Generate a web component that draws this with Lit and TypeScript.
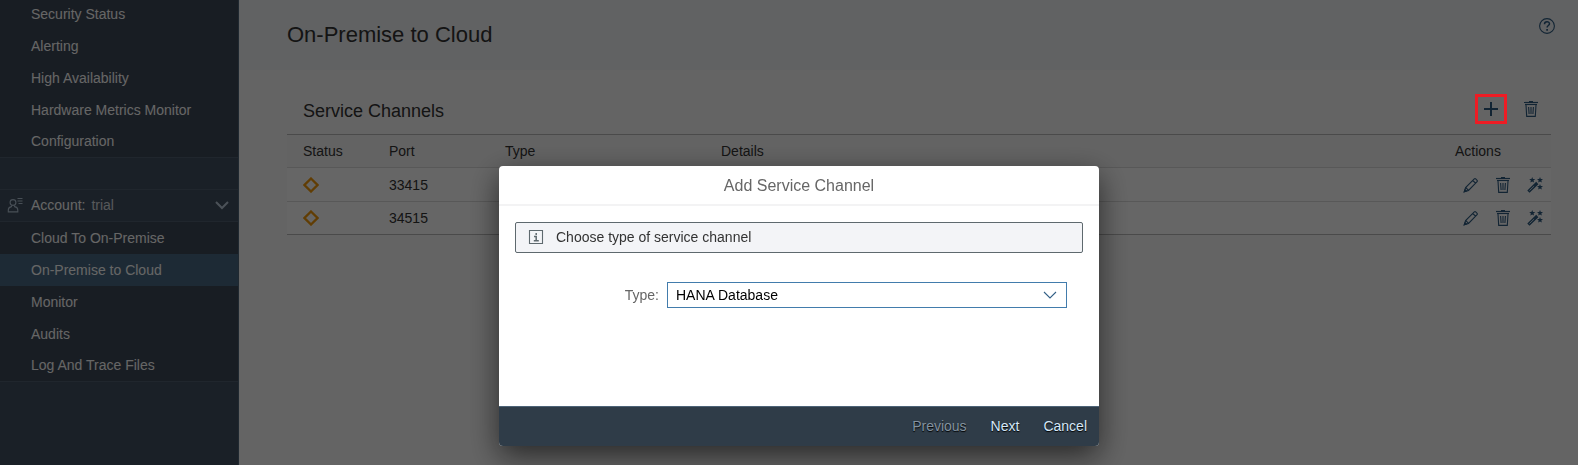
import { LitElement, html, css, svg } from "lit";
import { customElement, state } from "lit/decorators.js";

interface Channel {
  port: string;
}

const trash = svg`<path d="M1 1.500h14" stroke-width="1.200" /><path d="M6 .7h4" stroke-width="1.400" /><path d="M2 3.500h12" /><path d="M3 4l.7 11.400h8.600L13 4M5.600 6l.5 7M8 6v7M10.400 6l-.5 7" />`;

const star = (x: number, y: number) =>
  svg`<path d="M${x} ${y - 3}l.8 2 2.200.1-1.700 1.300.6 2.200-1.900-1.200-1.900 1.200.6-2.200-1.700-1.300 2.200-.1z" fill="currentColor" stroke="none" />`;

const icons = {
  help: svg`<circle cx="8" cy="8" r="7.4" /><path d="M5.500 6.200c0-3.200 5-3.200 5-.4 0 1.700-2.400 1.700-2.400 3.600" stroke-width="1.500" /><path d="M8.100 11v1.800" stroke-width="1.700" />`,
  add: svg`<path d="M8 1v14M1 8h14" stroke-width="2" />`,
  trash,
  edit: svg`<path d="M1.400 14.600l1.200-4.100L11.300 1.900q.7-.6 1.400 0l1.400 1.400q.7.7 0 1.400L5.500 13.400zM2.900 10.700l2.400 2.500M9.800 3.500l2.700 2.700" /><path d="M1.200 14.800l.8-2 1.300 1.300z" fill="currentColor" />`,
  wand: svg`<path d="M1.400 14.600L10.300 6" stroke-width="3.200" /><path d="M2.400 13.600l4.700-4.500" stroke="#dfe6ec" stroke-width=".9" />${star(5.2, 3)}${star(13, 3)}${star(13, 10)}`,
  account: svg`<circle cx="6" cy="5.500" r="2.900" /><path d="M4.500 8.400v1.200q-3.200.6-3.200 3.500v1.800h9.500v-1.800q0-2.900-3.200-3.500V8.400M10.500 1.500h5M10.500 4h5M11.500 6.500h4" />`,
  chevron: svg`<path d="M2 5l6 6 6-6" />`,
  info: svg`<path d="M1.500 1.500h13v13h-13z" /><path d="M8.200 4v2M6 7.500h2.200v4M5.800 11.700h5" stroke-width="1.500" />`,
};

const icon = (name: keyof typeof icons, cls = "") =>
  html`<svg class="icon ${cls}" viewBox="0 0 16 16" aria-hidden="true">${icons[name]}</svg>`;

@customElement("app-root")
export class AppRoot extends LitElement {
  @state() private channels: Channel[] = [{ port: "33415" }, { port: "34515" }];

  private general = ["Security Status", "Alerting", "High Availability", "Hardware Metrics Monitor", "Configuration"];
  private account = ["Cloud To On-Premise", "On-Premise to Cloud", "Monitor", "Audits", "Log And Trace Files"];

  static styles = css`
    :host {
      display: grid;
      grid-template-columns: 239px 1fr;
      height: 100vh;
      overflow: hidden;
      box-sizing: border-box;
      font: 14px/16px "Liberation Sans", Arial, sans-serif;
      color: #333;
      background: #fafafa;
    }
    * {
      box-sizing: border-box;
    }
    .icon {
      display: block;
      width: 16px;
      height: 16px;
      flex: none;
      fill: none;
      stroke: currentColor;
      stroke-width: 1.1;
    }
    button {
      font: inherit;
      padding: 0;
      border: 0;
      background: none;
      color: inherit;
    }

    .side {
      background: #435261;
      border-right: 1px solid #52677b;
      color: #fff;
      overflow: hidden;
    }
    .group {
      list-style: none;
      margin: 0;
      padding: 0;
      background: #3e4957;
      border-bottom: 1px solid #526070;
    }
    .group.first {
      margin-top: -2px;
    }
    .group li:last-child .link {
      height: 31px;
      padding-bottom: 1px;
    }
    .link {
      display: flex;
      align-items: center;
      height: 32px;
      padding-left: 31px;
      color: inherit;
      text-decoration: none;
    }
    .link.selected {
      background: #496a84;
    }
    .spacer {
      height: 32px;
      border-bottom: 1px solid #526070;
    }
    .account {
      display: flex;
      align-items: center;
      width: 100%;
      height: 32px;
      padding: 0 8px 1px 7px;
      border-bottom: 1px solid #526070;
      text-align: left;
    }
    .account .who {
      color: #b3c5d8;
    }
    .account .name {
      flex: 1;
      padding-left: 8px;
    }
    .account .value {
      padding-left: 2px;
      color: #d8dde2;
    }
    .account .arrow {
      color: #bccbdc;
      stroke-width: 2;
    }

    .head {
      display: flex;
      justify-content: space-between;
      height: 70px;
      padding: 18px 23px 0 48px;
      background: #f2f4f7;
    }
    h1 {
      margin: 0;
      font-size: 22px;
      line-height: 34px;
      font-weight: normal;
    }
    .tool {
      display: flex;
      align-items: center;
      justify-content: center;
      color: #2d5a80;
    }
    .head .tool {
      height: 16px;
    }
    .content {
      padding: 18px 27px 0 48px;
    }
    .bar {
      display: flex;
      align-items: center;
      height: 42px;
      margin-bottom: 4px;
      padding: 0 4px 0 16px;
    }
    h2 {
      flex: 1;
      margin: 0;
      padding-top: 4px;
      font-size: 18px;
      line-height: 20px;
      font-weight: normal;
    }
    .bar .tool {
      width: 32px;
      height: 30px;
      margin-left: 8px;
    }
    .bar .marked {
      position: relative;
    }
    .marked::after {
      content: "";
      position: absolute;
      inset: 0;
      z-index: 3;
      border: 3px solid #ed1c24;
    }
    table {
      width: 100%;
      border-collapse: collapse;
      table-layout: fixed;
      background: #fff;
    }
    th,
    td {
      height: 33px;
      padding: 0 0 0 16px;
      text-align: left;
      font-weight: normal;
      border-bottom: 1px solid #dcdcdc;
    }
    td {
      height: 34px;
    }
    th {
      background: #f7f7f7;
      border-top: 1px solid #bababa;
    }
    tbody tr:last-child td {
      height: 33px;
      border-bottom-color: #bababa;
    }
    .c-status {
      width: 86px;
    }
    .c-port {
      width: 116px;
    }
    .c-type {
      width: 216px;
    }
    .c-actions {
      width: 112px;
    }
    .diamond {
      color: #f39a0a;
      stroke-width: 2.3;
    }
    .row-actions {
      display: flex;
      gap: 16px;
      padding-left: 8px;
    }

    .layer {
      position: fixed;
      inset: 0;
      z-index: 2;
      display: flex;
      align-items: flex-end;
      justify-content: center;
      padding: 0 0 19px 20px;
      background: rgba(0, 0, 0, 0.6);
    }
    .dialog {
      display: flex;
      flex-direction: column;
      width: 600px;
      height: 280px;
      border-radius: 4px;
      overflow: hidden;
      background: #fff;
      box-shadow: 0 10px 30px rgba(0, 0, 0, 0.6);
    }
    .dialog h3 {
      margin: 0;
      padding-top: 2px;
      font-size: 16px;
      line-height: 36px;
      font-weight: normal;
      text-align: center;
      color: #666;
      border-bottom: 2px solid #f3f3f4;
    }
    .body {
      flex: 1;
      padding: 16px;
    }
    .strip {
      display: flex;
      align-items: center;
      gap: 12px;
      height: 31px;
      padding: 0 12px 1px;
      border: 1px solid #5e696e;
      border-radius: 2px;
      background: #f3f4f7;
    }
    .strip .icon {
      color: #5e696e;
    }
    .field {
      display: grid;
      grid-template-columns: 144px 1fr;
      align-items: center;
      column-gap: 8px;
      padding: 29px 16px 0 0;
    }
    .field label {
      text-align: right;
      color: #666;
    }
    .pick {
      display: grid;
      align-items: center;
    }
    .pick > * {
      grid-area: 1 / 1;
    }
    select {
      appearance: none;
      width: 100%;
      height: 26px;
      margin: 0;
      padding: 0 32px 0 8px;
      border: 1px solid #427cac;
      border-radius: 0;
      background: #fff;
      color: #000;
      font: inherit;
      outline: none;
    }
    .pick .icon {
      justify-self: end;
      margin-right: 9px;
      color: #346187;
      pointer-events: none;
    }
    .foot {
      display: flex;
      align-items: center;
      justify-content: flex-end;
      gap: 24px;
      height: 40px;
      padding: 0 12px 2px 0;
      background: #2f3c48;
      border-top: 1px solid #4d6377;
      color: #d5e7f8;
      text-shadow: 0 1px 1px #000;
    }
    .foot button {
      text-shadow: inherit;
    }
    .foot button:disabled {
      color: #8493a0;
    }
  `;

  private links(items: string[], current = "") {
    return items.map(
      (t) => html`<li><a class="link ${t === current ? "selected" : ""}" href="#">${t}</a></li>`
    );
  }

  render() {
    return html`
      <nav class="side">
        <ul class="group first">${this.links(this.general)}</ul>
        <div class="spacer"></div>
        <button class="account">
          ${icon("account", "who")}
          <span class="name">Account: <span class="value">trial</span></span>
          ${icon("chevron", "arrow")}
        </button>
        <ul class="group">${this.links(this.account, "On-Premise to Cloud")}</ul>
      </nav>
      <main>
        <header class="head">
          <h1>On-Premise to Cloud</h1>
          <button class="tool" aria-label="Help">${icon("help")}</button>
        </header>
        <section class="content">
          <div class="bar">
            <h2>Service Channels</h2>
            <button class="tool marked" aria-label="Add">${icon("add")}</button>
            <button class="tool" aria-label="Delete all">${icon("trash")}</button>
          </div>
          <table>
            <thead>
              <tr>
                <th class="c-status">Status</th>
                <th class="c-port">Port</th>
                <th class="c-type">Type</th>
                <th>Details</th>
                <th class="c-actions">Actions</th>
              </tr>
            </thead>
            <tbody>
              ${this.channels.map(
                (c) => html`<tr>
                  <td>
                    <svg class="icon diamond" viewBox="0 0 16 16" aria-hidden="true"><path d="M8 1.500L14.500 8 8 14.500 1.500 8z" /></svg>
                  </td>
                  <td>${c.port}</td>
                  <td></td>
                  <td></td>
                  <td>
                    <div class="row-actions">
                      <button class="tool" aria-label="Edit">${icon("edit")}</button>
                      <button class="tool" aria-label="Delete">${icon("trash")}</button>
                      <button class="tool" aria-label="Wizard">${icon("wand")}</button>
                    </div>
                  </td>
                </tr>`
              )}
            </tbody>
          </table>
        </section>
      </main>
      <div class="layer">
        <div class="dialog" role="dialog" aria-labelledby="title">
          <h3 id="title">Add Service Channel</h3>
          <div class="body">
            <div class="strip">${icon("info")}<span>Choose type of service channel</span></div>
            <div class="field">
              <label for="type">Type:</label>
              <div class="pick">
                <select id="type">
                  <option>HANA Database</option>
                </select>
                ${icon("chevron")}
              </div>
            </div>
          </div>
          <div class="foot">
            <button disabled>Previous</button>
            <button>Next</button>
            <button>Cancel</button>
          </div>
        </div>
      </div>
    `;
  }
}
